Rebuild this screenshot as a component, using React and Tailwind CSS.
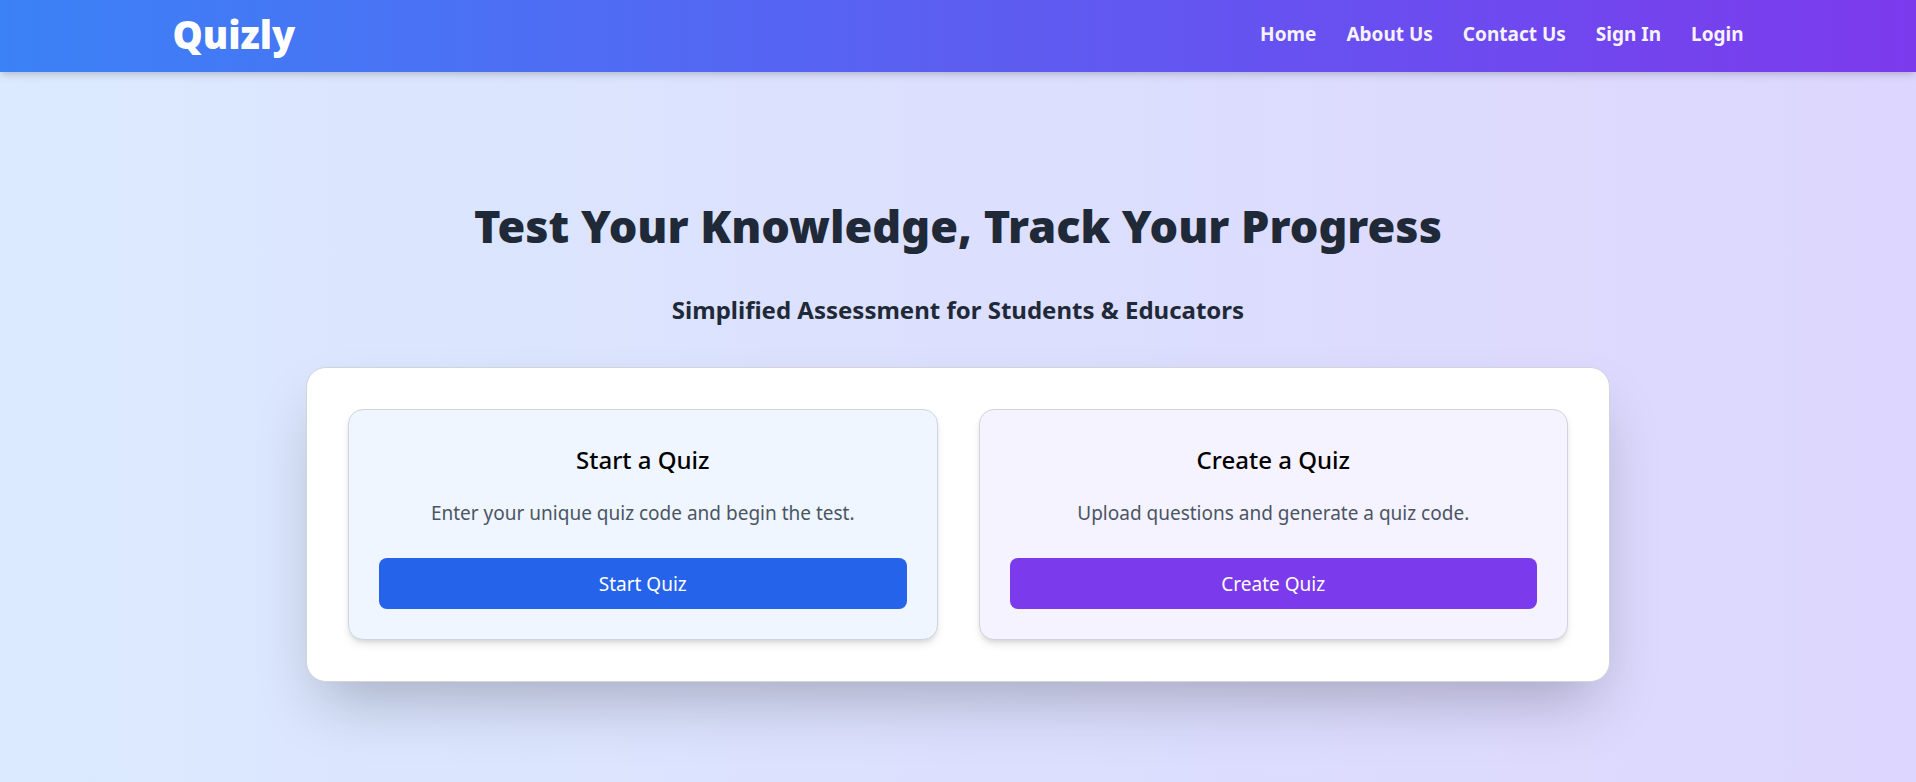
const links = ["Home", "About Us", "Contact Us", "Sign In", "Login"];

const cards = [
  {
    title: "Start a Quiz",
    text: "Enter your unique quiz code and begin the test.",
    action: "Start Quiz",
    panel: "bg-[#eff6ff]",
    button: "bg-[#2563eb] hover:bg-[#1d4ed8]",
  },
  {
    title: "Create a Quiz",
    text: "Upload questions and generate a quiz code.",
    action: "Create Quiz",
    panel: "bg-[#f5f3ff]",
    button: "bg-[#7c3aed] hover:bg-[#6d28d9]",
  },
];

function Header() {
  return (
    <header className="bg-[linear-gradient(to_right,#3b82f6,#7c3aed)] px-[9%] pt-[10px] pb-[14px] shadow-[0_5px_8px_-1px_rgba(0,0,0,0.1),0_3px_5px_-2px_rgba(0,0,0,0.1)]">
      <div className="flex items-center justify-between">
        <a href="#" className="text-[38px] leading-[48px] font-black text-white">
          Quizly
        </a>
        <nav className="flex gap-[30px]">
          {links.map((link) => (
            <a key={link} href="#" className="text-[19px] leading-[30px] font-bold text-[#f5f3ff]">
              {link}
            </a>
          ))}
        </nav>
      </div>
    </header>
  );
}

function QuizCard({ title, text, action, panel, button }) {
  return (
    <section
      className={`flex flex-col rounded-[15px] border border-[#d1d5db] p-[30px] text-center shadow-[0_5px_8px_-1px_rgba(0,0,0,0.1),0_3px_5px_-2px_rgba(0,0,0,0.1)] ${panel}`}
    >
      <h3 className="text-[24px] leading-[40px] font-medium text-black">{title}</h3>
      <p className="mt-[18px] text-[19px] leading-[30px] text-[#4b5563]">{text}</p>
      <button
        type="button"
        className={`mt-[30px] w-full rounded-[8px] pt-[11px] pb-[10px] text-[19px] leading-[30px] text-white ${button}`}
      >
        {action}
      </button>
    </section>
  );
}

export default function App() {
  return (
    <div className="min-h-screen bg-[linear-gradient(to_right,#dbeafe,#ddd6fe)] font-['Noto_Sans','Open_Sans',sans-serif]">
      <Header />
      <main className="flex flex-col items-center pt-[129px] pb-[100px]">
        <h1 className="text-center text-[45px] leading-[50px] font-black text-[#1f2937]">
          Test Your Knowledge, Track Your Progress
        </h1>
        <h2 className="mt-[41px] text-center text-[24px] leading-[35px] font-bold text-[#1f2937]">
          Simplified Assessment for Students &amp; Educators
        </h2>
        <div className="mt-[40px] grid w-full max-w-[1304px] grid-cols-2 gap-[41px] rounded-[20px] border border-[#d1d5db] bg-white p-[41px] shadow-[0_31px_62px_-15px_rgba(0,0,0,0.25)]">
          {cards.map((card) => (
            <QuizCard key={card.title} {...card} />
          ))}
        </div>
      </main>
    </div>
  );
}
